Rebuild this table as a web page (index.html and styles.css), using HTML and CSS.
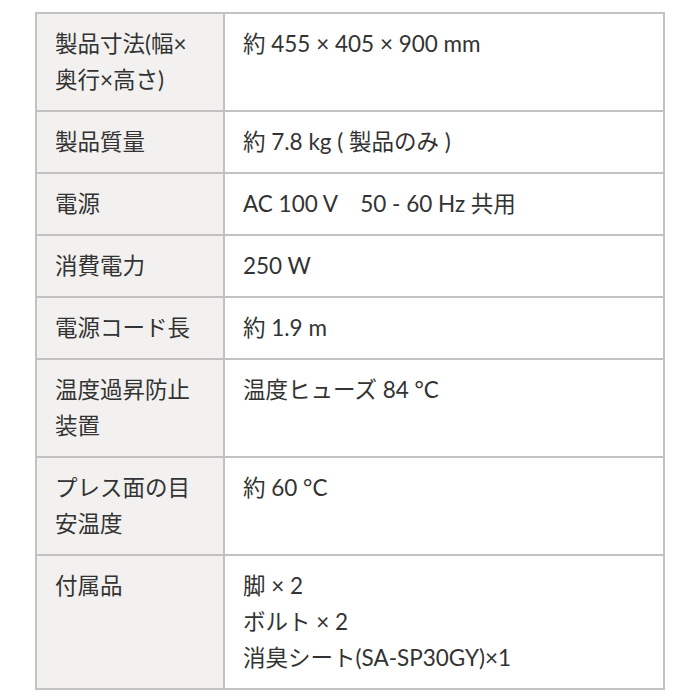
FILE: index.html
```html
<!DOCTYPE html>
<html lang="ja">
<head>
<meta charset="utf-8">
<link rel="stylesheet" href="styles.css">
</head>
<body>
<div class="wrap">
<table class="spec">
<tbody>
<tr><th>製品寸法(幅×奥行×高さ)</th><td>約 455 × 405 × 900 mm</td></tr>
<tr><th>製品質量</th><td>約 7.8 kg ( 製品のみ )</td></tr>
<tr><th>電源</th><td>AC 100 V&nbsp;&nbsp;&nbsp;&nbsp;50 - 60 Hz 共用</td></tr>
<tr><th>消費電力</th><td>250 W</td></tr>
<tr><th>電源コード長</th><td>約 1.9 m</td></tr>
<tr><th>温度過昇防止装置</th><td>温度ヒューズ 84 °C</td></tr>
<tr><th>プレス面の目安温度</th><td>約 60 °C</td></tr>
<tr><th>付属品</th><td>脚 × 2<br>ボルト × 2<br>消臭シート(SA-SP30GY)×1</td></tr>
</tbody>
</table>
</div>
</body>
</html>
```

FILE: styles.css
```css
html, body {
  margin: 0;
  padding: 0;
  background: #ffffff;
}
.wrap {
  padding: 12px 35px;
}
.spec {
  width: 630px;
  border-collapse: collapse;
  table-layout: fixed;
  font-family: Lato, "Noto Sans CJK JP", sans-serif;
  font-size: 22.5px;
  line-height: 36px;
  color: #333333;
}
.spec th,
.spec td {
  border: 2px solid #c2c2c2;
  padding: 12px 18px;
  text-align: left;
  vertical-align: top;
  font-weight: normal;
}
.spec th {
  width: 150px;
  background: #f2f1ef;
}
.spec td {
  background: #ffffff;
}
```
